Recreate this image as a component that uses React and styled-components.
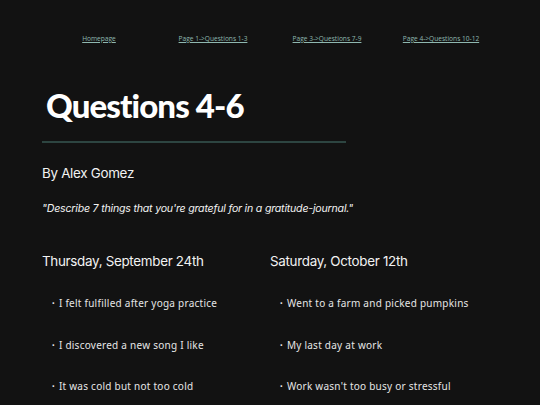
import React from "react";
import styled, { createGlobalStyle } from "styled-components";

const GlobalStyle = createGlobalStyle`
  html, body {
    margin: 0;
    padding: 0;
    background: #121212;
  }
  body {
    font-family: "Inter", "Roboto", sans-serif;
    color: #f2f2f2;
  }
`;

const days = [
  {
    title: "Thursday, September 24th",
    items: [
      "I felt fulfilled after yoga practice",
      "I discovered a new song I like",
      "It was cold but not too cold",
    ],
  },
  {
    title: "Saturday, October 12th",
    items: [
      "Went to a farm and picked pumpkins",
      "My last day at work",
      "Work wasn't too busy or stressful",
    ],
  },
];

const links = [
  "Homepage",
  "Page 1->Questions 1-3",
  "Page 3->Questions 7-9",
  "Page 4->Questions 10-12",
];

export default function App() {
  return (
    <Page>
      <GlobalStyle />
      <Nav>
        {links.map((l) => (
          <NavLink href="#" key={l}>
            {l}
          </NavLink>
        ))}
      </Nav>
      <Title>Questions 4-6</Title>
      <Rule />
      <Author>By Alex Gomez</Author>
      <Prompt>"Describe 7 things that you're grateful for in a gratitude-journal."</Prompt>
      <Columns>
        {days.map((d) => (
          <Day key={d.title}>
            <DayTitle>{d.title}</DayTitle>
            <List>
              {d.items.map((i) => (
                <Item key={i}>{i}</Item>
              ))}
            </List>
          </Day>
        ))}
      </Columns>
    </Page>
  );
}

const Page = styled.div`
  width: 456px;
  margin: 0 auto;
  padding-top: 33px;
  height: 372px;
  overflow: hidden;
`;

const Nav = styled.nav`
  display: grid;
  grid-template-columns: repeat(4, 1fr);
  text-align: center;
`;

const NavLink = styled.a`
  font-family: "Open Sans", sans-serif;
  font-size: 6.6px;
  line-height: 12px;
  color: #8fb8b0;
  text-decoration: underline;
`;

const Title = styled.h1`
  font-family: "Lato", sans-serif;
  font-weight: 900;
  font-size: 33px;
  letter-spacing: -0.9px;
  line-height: 36px;
  margin: 42px 0 0 4px;
  color: #ffffff;
`;

const Rule = styled.div`
  width: 304px;
  height: 2px;
  background: #2d4541;
  margin-top: 18px;
`;

const Author = styled.div`
  font-size: 13.4px;
  letter-spacing: -0.3px;
  line-height: 20px;
  margin-top: 20px;
`;

const Prompt = styled.div`
  font-size: 10.6px;
  font-style: italic;
  letter-spacing: -0.2px;
  line-height: 14px;
  margin-top: 19px;
`;

const Columns = styled.div`
  display: grid;
  grid-template-columns: 1fr 1fr;
  margin-top: 35px;
`;

const Day = styled.section``;

const DayTitle = styled.h2`
  font-size: 13.4px;
  font-weight: 400;
  letter-spacing: -0.3px;
  line-height: 20px;
  margin: 0;
`;

const List = styled.ul`
  list-style: none;
  margin: 25px 0 0;
  padding: 0 0 0 10px;
  display: flex;
  flex-direction: column;
  gap: 26.5px;
`;

const Item = styled.li`
  font-family: "Noto Sans", sans-serif;
  font-size: 10px;
  letter-spacing: 0.25px;
  line-height: 14px;
  color: #e6e6e6;
  &::before {
    content: "•";
    font-size: 7px;
    margin-right: 4px;
    vertical-align: 1px;
  }
`;
